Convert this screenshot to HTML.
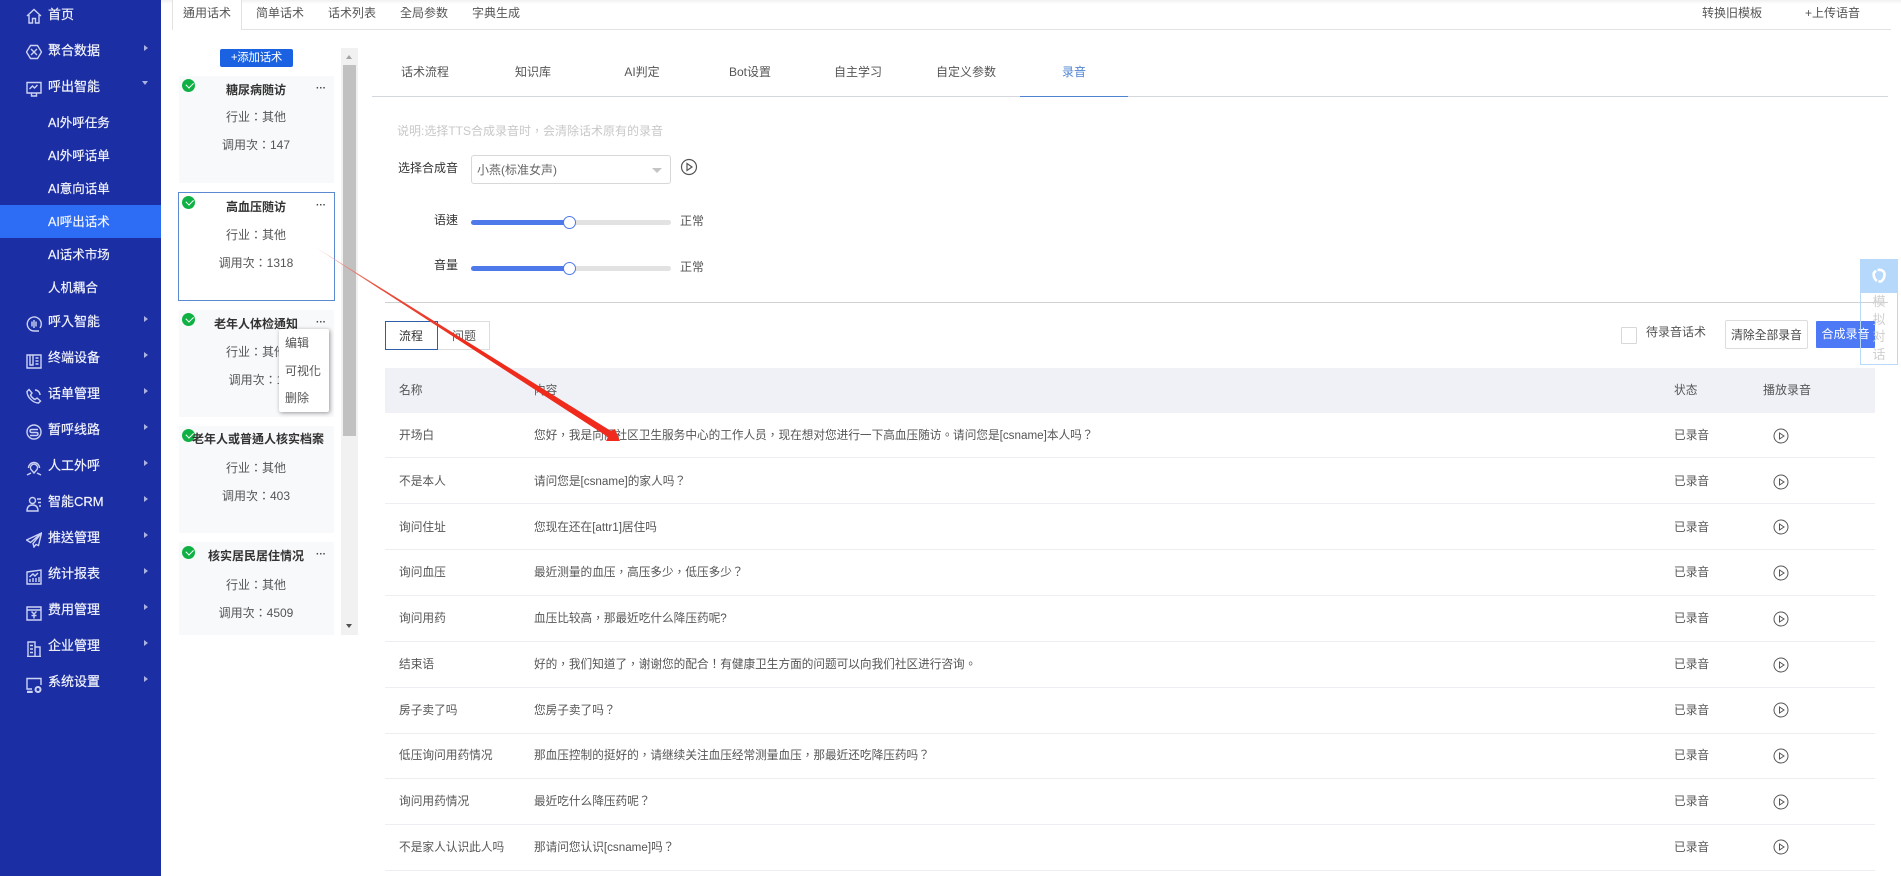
<!DOCTYPE html>
<html lang="zh-TW"><head><meta charset="utf-8"><title>录音</title>
<style>
*{box-sizing:border-box}
html,body{margin:0;padding:0;width:1901px;height:876px;overflow:hidden;background:#fff}
body{font-family:"Liberation Sans","Noto Sans CJK TC",sans-serif;font-size:12px;color:#555;position:relative}
.a{position:absolute}
.t{position:absolute;line-height:16px;height:16px;white-space:nowrap}
.c{transform:translateX(-50%)}
#side{position:absolute;left:0;top:0;width:161px;height:876px;background:#1c2ea4}
#side .t{color:#f2f4fc;font-size:13px;left:48px;margin-top:1px;-webkit-text-stroke:.2px #f2f4fc}
#side .s{font-size:12.5px;left:48px}
#side svg{position:absolute;left:26px;width:16px;height:16px;fill:none;stroke:#ccd3f2;stroke-width:1.4;margin-top:1px}
.ar{position:absolute;left:144px;width:0;height:0;border-left:4px solid #a9b2e0;border-top:3.5px solid transparent;border-bottom:3.5px solid transparent}
.card{position:absolute;left:179px;width:155px;background:#f8f9fb}
.dot{position:absolute;left:182px;width:13px;height:13px;border-radius:50%;background:#10b144}
.dot:after{content:"";position:absolute;left:3.5px;top:3px;width:6px;height:3.5px;border-left:1.4px solid #fff;border-bottom:1.4px solid #fff;transform:rotate(-45deg)}
.more{position:absolute;left:316px;font-size:10px;line-height:10px;color:#444;font-weight:bold;letter-spacing:0;margin-top:1px}
.tl{font-weight:bold;color:#333;left:256px}
.ct{left:256px;color:#555;font-size:12px;margin-top:1px}
.tab{color:#555}
.line{position:absolute;height:1px;background:#ddd}
.n{left:399px;color:#555;margin-top:2px;font-size:11.7px}.ctt{left:534px;color:#555;margin-top:2px;font-size:11.65px}.st{left:1674px;color:#555;margin-top:2px;font-size:11.7px}
.rl{position:absolute;left:385px;width:1490px;height:1px;background:#eceef2}
.pl{position:absolute;left:1773px;width:16px;height:16px}
</style></head><body>

<div id="side">
<svg style="top:7px" viewBox="0 0 16 16"><path d="M1 8 8 1.500 15 8M3 7v8h3.500v-4.500h3V15H13V7"/></svg><div class="t" style="top:6px">首页</div>
<svg style="top:43px" viewBox="0 0 16 16"><path d="M4.500 1.500h7L15.500 8l-4 6.500h-7L.5 8zM5 5l6 6M11 5l-6 6"/></svg><div class="t" style="top:42px">聚合数据</div><i class="ar" style="top:45px"></i>
<svg style="top:80px" viewBox="0 0 16 16"><path d="M1 1.500h14v10.500H1zM3.500 8l3-3 2 2 3-3M5.500 12v3h5v-3"/></svg><div class="t" style="top:78px">呼出智能</div>
<i class="a" style="left:142px;top:81px;border-top:4px solid #a9b2e0;border-left:3.500px solid transparent;border-right:3.500px solid transparent"></i>
<div class="t s" style="top:114px">AI外呼任务</div>
<div class="t s" style="top:147px">AI外呼话单</div>
<div class="t s" style="top:180px">AI意向话单</div>
<div class="a" style="left:0;top:205px;width:161px;height:33px;background:#2d6cf5"></div>
<div class="t s" style="top:213px">AI呼出话术</div>
<div class="t s" style="top:246px">AI话术市场</div>
<div class="t s" style="top:279px">人机耦合</div>
<svg style="top:315px" viewBox="0 0 16 16"><path d="M14 12A7 7 0 1 0 8 15h5M6 5.500v5M8 4v8M10 5.500v5"/></svg><div class="t" style="top:313px">呼入智能</div><i class="ar" style="top:316px"></i>
<svg style="top:352px" viewBox="0 0 16 16"><path d="M1 2h14v13H1zM4 2v10h3V2M9.500 5h3M9.500 8h3M9.500 11h3"/></svg><div class="t" style="top:349px">终端设备</div><i class="ar" style="top:352px"></i>
<svg style="top:387px" viewBox="0 0 16 16"><path d="M3 1.500 6 5 4.500 7c1 2 2.500 3.500 4.500 4.500L11 10l3.500 3-2 2C7 15 1 9 1 3.500zM9 2a5 5 0 0 1 5 5"/></svg><div class="t" style="top:385px">话单管理</div><i class="ar" style="top:388px"></i>
<svg style="top:423px" viewBox="0 0 16 16"><circle cx="8" cy="8" r="7"/><path d="M12 5.500H5.500Q4 5.500 4 7t1.500 1.500h5q1.500 0 1.500 1.500t-1.500 1.500H4"/></svg><div class="t" style="top:421px">暂呼线路</div><i class="ar" style="top:424px"></i>
<svg style="top:459px" viewBox="0 0 16 16"><path d="M2.500 8a5.500 5.500 0 1 1 11 0M5 9.500a3.500 3.500 0 1 1 6 0L8 13zM1 15l4-2M15 15l-4-2"/></svg><div class="t" style="top:457px">人工外呼</div><i class="ar" style="top:460px"></i>
<svg style="top:495px" viewBox="0 0 16 16"><circle cx="6.500" cy="4.500" r="3"/><path d="M1 15c0-4 2-6 5.500-6S12 11 12 15zM11 3h4M12 6.500h3M13 10h2"/></svg><div class="t" style="top:493px">智能CRM</div><i class="ar" style="top:496px"></i>
<svg style="top:531px" viewBox="0 0 16 16"><path d="M15.500 1 .5 8l4 2.500L15.500 1 7 11.500l1 3.500 2-2.500 2.500 1z"/></svg><div class="t" style="top:529px">推送管理</div><i class="ar" style="top:532px"></i>
<svg style="top:568px" viewBox="0 0 16 16"><path d="M1 3 15 1v14H1zM3.500 8 7 5l2 2 3-3M4 13v-3M7 13V9M10 13V9M13 13V8"/></svg><div class="t" style="top:565px">统计报表</div><i class="ar" style="top:568px"></i>
<svg style="top:604px" viewBox="0 0 16 16"><path d="M1 2h14v13H1zM1 5h14M5.500 6.500 8 9l2.500-2.500M8 9v4.500M5.500 10.500h5"/></svg><div class="t" style="top:601px">费用管理</div><i class="ar" style="top:604px"></i>
<svg style="top:640px" viewBox="0 0 16 16"><path d="M1 15.500h14M2 15.500V1h7v14.500M9 6h5v9.500M4 4.500h3M4 8h3M4 11.500h3"/></svg><div class="t" style="top:637px">企业管理</div><i class="ar" style="top:640px"></i>
<svg style="top:676px" viewBox="0 0 16 16"><path d="M6 12H1V1.500h14V8M1 14.500h5v1H1"/><circle cx="12" cy="12.500" r="2.500" stroke-width="2"/></svg><div class="t" style="top:673px">系统设置</div><i class="ar" style="top:676px"></i>
</div>

<!-- top tabs -->
<div class="a" style="left:161px;top:0;width:1740px;height:4px;background:linear-gradient(#f1f1f1,#fff)"></div>
<div class="line" style="left:172px;top:29px;width:1719px;background:#e2e2e2"></div>
<div class="a" style="left:172px;top:0;width:70px;height:30px;background:#fff;border:1px solid #e2e2e2;border-top:0;border-bottom:0"></div>
<div class="t tab" style="left:183px;top:5px">通用话术</div>
<div class="t tab" style="left:256px;top:5px">简单话术</div>
<div class="t tab" style="left:328px;top:5px">话术列表</div>
<div class="t tab" style="left:400px;top:5px">全局参数</div>
<div class="t tab" style="left:472px;top:5px">字典生成</div>
<div class="t tab" style="left:1702px;top:5px">转换旧模板</div>
<div class="t tab" style="left:1805px;top:5px">+上传语音</div>

<!-- list -->
<div class="a" style="left:220px;top:49px;width:73px;height:18px;background:#1a62e2;border-radius:2px;color:#fff;text-align:center;line-height:18px;font-size:11.5px;letter-spacing:-.3px">+添加话术</div>
<div class="a" style="left:341px;top:48px;width:17px;height:587px;background:#f1f1f1"></div>
<div class="a" style="left:343px;top:65px;width:13px;height:371px;background:#c1c1c1"></div>
<i class="a" style="left:346px;top:55px;border-bottom:4px solid #a3a3a3;border-left:3.500px solid transparent;border-right:3.500px solid transparent"></i>
<i class="a" style="left:346px;top:624px;border-top:4px solid #505050;border-left:3.500px solid transparent;border-right:3.500px solid transparent"></i>

<div class="card" style="top:76px;height:107px"></div>
<div class="card" style="top:192px;height:109px;left:178px;width:157px;background:#fff;border:1px solid #5b8ad0"></div>
<div class="card" style="top:310px;height:107px"></div>
<div class="card" style="top:426px;height:107px"></div>
<div class="card" style="top:542px;height:93px"></div>

<i class="dot" style="top:79px"></i><div class="more" style="top:83px">···</div>
<div class="t c tl" style="top:82px">糖尿病随访</div><div class="t c ct" style="top:108px">行业：其他</div><div class="t c ct" style="top:136px">调用次：147</div>
<i class="dot" style="top:196px"></i><div class="more" style="top:200px">···</div>
<div class="t c tl" style="top:199px">高血压随访</div><div class="t c ct" style="top:226px">行业：其他</div><div class="t c ct" style="top:254px">调用次：1318</div>
<i class="dot" style="top:313px"></i><div class="more" style="top:317px">···</div>
<div class="t c tl" style="top:316px">老年人体检通知</div><div class="t c ct" style="top:343px">行业：其他</div><div class="t c ct" style="top:371px">调用次：1</div>
<i class="dot" style="top:429px"></i>
<div class="t tl" style="top:431px;left:192px;width:132px;overflow:hidden">老年人或普通人核实档案信息</div><div class="t c ct" style="top:459px">行业：其他</div><div class="t c ct" style="top:487px">调用次：403</div>
<i class="dot" style="top:546px"></i><div class="more" style="top:549px">···</div>
<div class="t c tl" style="top:548px">核实居民居住情况</div><div class="t c ct" style="top:576px">行业：其他</div><div class="t c ct" style="top:604px">调用次：4509</div>

<div class="a" style="left:279px;top:329px;width:50px;height:83px;background:#fff;box-shadow:1px 1px 4px rgba(0,0,0,.4);border-radius:2px"></div>
<div class="t" style="left:285px;top:335px">编辑</div>
<div class="t" style="left:285px;top:363px">可视化</div>
<div class="t" style="left:285px;top:390px">删除</div>

<!-- sub tabs -->
<div class="line" style="left:372px;top:96px;width:1516px;background:#d4d7db"></div>
<div class="a" style="left:1020px;top:96px;width:108px;height:1px;background:#4f84d2"></div>
<div class="t c tab" style="left:425px;top:64px">话术流程</div>
<div class="t c tab" style="left:533px;top:64px">知识库</div>
<div class="t c tab" style="left:642px;top:64px">AI判定</div>
<div class="t c tab" style="left:750px;top:64px">Bot设置</div>
<div class="t c tab" style="left:858px;top:64px">自主学习</div>
<div class="t c tab" style="left:966px;top:64px">自定义参数</div>
<div class="t c" style="left:1074px;top:64px;color:#4f84d2">录音</div>

<div class="t" style="left:397px;top:123px;color:#c8c8c8">说明:选择TTS合成录音时，会清除话术原有的录音</div>
<div class="t" style="left:398px;top:160px;color:#333">选择合成音</div>
<div class="a" style="left:471px;top:155px;width:200px;height:29px;border:1px solid #d8d8d8;border-radius:3px"></div>
<div class="t" style="left:477px;top:162px;color:#666">小燕(标准女声)</div>
<i class="a" style="left:652px;top:168px;border-top:5px solid #c4c4c4;border-left:5px solid transparent;border-right:5px solid transparent"></i>
<svg class="a" style="left:680px;top:158px" width="18" height="18" viewBox="0 0 18 18" fill="none" stroke="#555" stroke-width="1.200"><circle cx="9" cy="9" r="7.500"/><path d="M7 5.500 12 9l-5 3.500z"/></svg>

<div class="t" style="left:434px;top:212px;color:#333">语速</div>
<div class="a" style="left:471px;top:220px;width:200px;height:5px;background:#e2e2e2;border-radius:2.5px"></div>
<div class="a" style="left:471px;top:220px;width:98px;height:5px;background:#4d79ea;border-radius:2.5px"></div>
<div class="a" style="left:563px;top:216px;width:13px;height:13px;background:#fff;border:1px solid #4d79ea;border-radius:50%"></div>
<div class="t" style="left:680px;top:213px">正常</div>
<div class="t" style="left:434px;top:257px;color:#333">音量</div>
<div class="a" style="left:471px;top:266px;width:200px;height:5px;background:#e2e2e2;border-radius:2.5px"></div>
<div class="a" style="left:471px;top:266px;width:98px;height:5px;background:#4d79ea;border-radius:2.5px"></div>
<div class="a" style="left:563px;top:262px;width:13px;height:13px;background:#fff;border:1px solid #4d79ea;border-radius:50%"></div>
<div class="t" style="left:680px;top:259px">正常</div>
<div class="line" style="left:385px;top:302px;width:1503px;background:#d0d0d0"></div>

<!-- subtabs 2 -->
<div class="a" style="left:437px;top:321px;width:53px;height:29px;border:1px solid #ddd"></div>
<div class="a" style="left:385px;top:321px;width:53px;height:29px;border:1px solid #2c5fa8"></div>
<div class="t" style="left:399px;top:328px;color:#333">流程</div>
<div class="t" style="left:452px;top:328px;color:#555">问题</div>

<div class="a" style="left:1621px;top:327px;width:16px;height:17px;border:1px solid #d8d8d8;border-radius:1px"></div>
<div class="t" style="left:1646px;top:324px">待录音话术</div>
<div class="a" style="left:1725px;top:320px;width:83px;height:29px;border:1px solid #ddd;border-radius:2px;text-align:center;line-height:28px;color:#444;background:#fff;font-size:11.8px">清除全部录音</div>
<div class="a" style="left:1816px;top:321px;width:59px;height:27px;background:#4d79f6;color:#fff;text-align:center;line-height:27px;border-radius:1px">合成录音</div>

<div class="a" style="left:385px;top:368px;width:1490px;height:45px;background:#f0f1f6"></div>
<div class="t n" style="top:381px">名称</div><div class="t ctt" style="top:381px">内容</div><div class="t st" style="top:381px">状态</div><div class="t" style="left:1763px;top:382px">播放录音</div>

<div class="t n" style="top:426px">开场白</div><div class="t ctt" style="top:426px">您好，我是向阳社区卫生服务中心的工作人员，现在想对您进行一下高血压随访。请问您是[csname]本人吗？</div><div class="t st" style="top:426px">已录音</div>
<svg class="pl" style="top:428px" viewBox="0 0 16 16" fill="none" stroke="#555" stroke-width="1"><circle cx="8" cy="8" r="7"/><path d="M6.500 5 11 8l-4.500 3z"/></svg><div class="rl" style="top:457px"></div>

<div class="t n" style="top:472px">不是本人</div><div class="t ctt" style="top:472px">请问您是[csname]的家人吗？</div><div class="t st" style="top:472px">已录音</div>
<svg class="pl" style="top:474px" viewBox="0 0 16 16" fill="none" stroke="#555" stroke-width="1"><circle cx="8" cy="8" r="7"/><path d="M6.500 5 11 8l-4.500 3z"/></svg><div class="rl" style="top:503px"></div>

<div class="t n" style="top:518px">询问住址</div><div class="t ctt" style="top:518px">您现在还在[attr1]居住吗</div><div class="t st" style="top:518px">已录音</div>
<svg class="pl" style="top:519px" viewBox="0 0 16 16" fill="none" stroke="#555" stroke-width="1"><circle cx="8" cy="8" r="7"/><path d="M6.500 5 11 8l-4.500 3z"/></svg><div class="rl" style="top:549px"></div>

<div class="t n" style="top:563px">询问血压</div><div class="t ctt" style="top:563px">最近测量的血压，高压多少，低压多少？</div><div class="t st" style="top:563px">已录音</div>
<svg class="pl" style="top:565px" viewBox="0 0 16 16" fill="none" stroke="#555" stroke-width="1"><circle cx="8" cy="8" r="7"/><path d="M6.500 5 11 8l-4.500 3z"/></svg><div class="rl" style="top:595px"></div>

<div class="t n" style="top:609px">询问用药</div><div class="t ctt" style="top:609px">血压比较高，那最近吃什么降压药呢?</div><div class="t st" style="top:609px">已录音</div>
<svg class="pl" style="top:611px" viewBox="0 0 16 16" fill="none" stroke="#555" stroke-width="1"><circle cx="8" cy="8" r="7"/><path d="M6.500 5 11 8l-4.500 3z"/></svg><div class="rl" style="top:641px"></div>

<div class="t n" style="top:655px">结束语</div><div class="t ctt" style="top:655px">好的，我们知道了，谢谢您的配合！有健康卫生方面的问题可以向我们社区进行咨询。</div><div class="t st" style="top:655px">已录音</div>
<svg class="pl" style="top:657px" viewBox="0 0 16 16" fill="none" stroke="#555" stroke-width="1"><circle cx="8" cy="8" r="7"/><path d="M6.500 5 11 8l-4.500 3z"/></svg><div class="rl" style="top:687px"></div>

<div class="t n" style="top:701px">房子卖了吗</div><div class="t ctt" style="top:701px">您房子卖了吗？</div><div class="t st" style="top:701px">已录音</div>
<svg class="pl" style="top:702px" viewBox="0 0 16 16" fill="none" stroke="#555" stroke-width="1"><circle cx="8" cy="8" r="7"/><path d="M6.500 5 11 8l-4.500 3z"/></svg><div class="rl" style="top:733px"></div>

<div class="t n" style="top:746px">低压询问用药情况</div><div class="t ctt" style="top:746px">那血压控制的挺好的，请继续关注血压经常测量血压，那最近还吃降压药吗？</div><div class="t st" style="top:746px">已录音</div>
<svg class="pl" style="top:748px" viewBox="0 0 16 16" fill="none" stroke="#555" stroke-width="1"><circle cx="8" cy="8" r="7"/><path d="M6.500 5 11 8l-4.500 3z"/></svg><div class="rl" style="top:778px"></div>

<div class="t n" style="top:792px">询问用药情况</div><div class="t ctt" style="top:792px">最近吃什么降压药呢？</div><div class="t st" style="top:792px">已录音</div>
<svg class="pl" style="top:794px" viewBox="0 0 16 16" fill="none" stroke="#555" stroke-width="1"><circle cx="8" cy="8" r="7"/><path d="M6.500 5 11 8l-4.500 3z"/></svg><div class="rl" style="top:824px"></div>

<div class="t n" style="top:838px">不是家人认识此人吗</div><div class="t ctt" style="top:838px">那请问您认识[csname]吗？</div><div class="t st" style="top:838px">已录音</div>
<svg class="pl" style="top:839px" viewBox="0 0 16 16" fill="none" stroke="#555" stroke-width="1"><circle cx="8" cy="8" r="7"/><path d="M6.500 5 11 8l-4.500 3z"/></svg><div class="rl" style="top:870px"></div>

<!-- floating -->
<div class="a" style="left:1860px;top:259px;width:38px;height:106px;border:1px solid #b9d9fb"></div>
<div class="a" style="left:1860px;top:259px;width:38px;height:34px;background:#b5d8fb"></div>
<svg class="a" style="left:1871px;top:268px" width="16" height="16" viewBox="0 0 16 16" fill="none" stroke="#fff" stroke-width="2.600"><path d="M5 2.500 2.800 5Q2 10 6 13M6.500 2Q11 1 13.200 4.500Q14.500 10 10 13.500H7.500"/></svg>
<div class="a" style="left:1860px;top:293px;width:38px;text-align:center;font-size:13px;line-height:17.500px;color:#cfcfcf">模<br>拟<br>对<br>话</div>

<!-- arrow -->
<svg class="a" style="left:0;top:0" width="1901" height="876"><defs><linearGradient id="g" gradientUnits="userSpaceOnUse" x1="315" y1="247" x2="620" y2="441"><stop offset="0" stop-color="#f2b5ad"/><stop offset=".2" stop-color="#e8503f"/><stop offset=".5" stop-color="#ee2c1c"/><stop offset="1" stop-color="#f02a1c"/></linearGradient></defs>
<polygon points="315,247 611,431 615,429 620,441 606,441 608,437" fill="url(#g)"/></svg>
</body></html>
